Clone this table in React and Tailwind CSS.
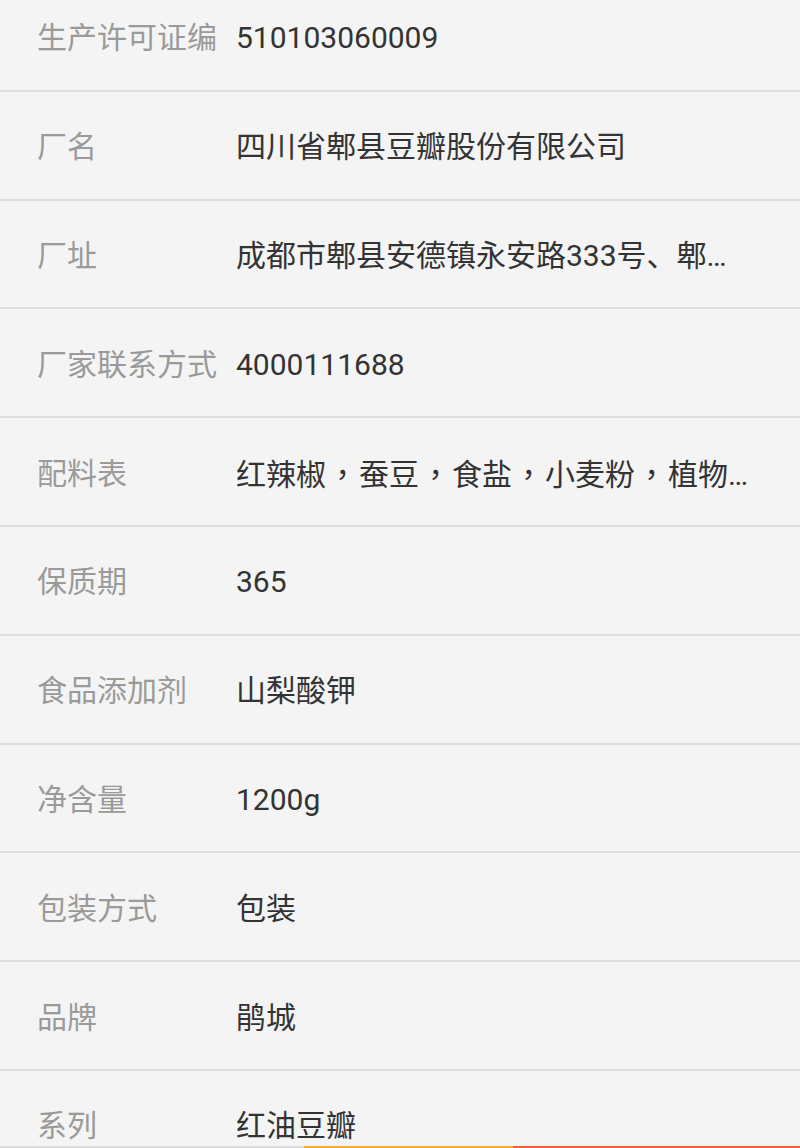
export default function App() {
  const C = ({ children }) => (
    <span className="px-[1.5px]" style={{ fontFamily: '"Noto Sans CJK TC", sans-serif' }}>{children}</span>
  );
  const rows = [
    ["生产许可证编", "510103060009"],
    ["厂名", "四川省郫县豆瓣股份有限公司"],
    ["厂址", "成都市郫县安德镇永安路333号、郫县安德镇川菜园区"],
    ["厂家联系方式", "4000111688"],
    [
      "配料表",
      <>
        红辣椒<C>，</C>蚕豆<C>，</C>食盐<C>，</C>小麦粉<C>，</C>植物油<C>，</C>香辛料
      </>,
    ],
    ["保质期", "365"],
    ["食品添加剂", "山梨酸钾"],
    ["净含量", "1200g"],
    ["包装方式", "包装"],
    ["品牌", "鹃城"],
    ["系列", "红油豆瓣"],
  ];
  const font = {
    fontFamily: '"Roboto", "Noto Sans CJK SC", sans-serif',
  };
  return (
    <div className="relative w-[800px] h-[1148px] overflow-hidden bg-[#f4f4f4]" style={font}>
      <div className="-mt-[17px] flex flex-col">
        {rows.map(([k, v], i) => (
          <div
            key={i}
            className="box-border h-[108.8px] shrink-0 flex items-center border-b-2 border-[#dedede] pl-[37px] pr-[40px] pt-[4px]"
          >
            <div className="w-[199px] shrink-0 text-[30px] leading-none text-[#9a9a9a] whitespace-nowrap">{k}</div>
            <div className="min-w-0 max-w-[514px] text-[30px] leading-[38px] text-[#333333] whitespace-nowrap overflow-hidden text-ellipsis">
              {v}
            </div>
          </div>
        ))}
      </div>
      <div className="absolute left-0 bottom-0 w-full h-[2px] flex">
        <div className="w-[304px] bg-[#dcdcdc]" />
        <div className="w-[209px] bg-[#f2ae34]" />
        <div className="flex-1 bg-[#f0603a]" />
      </div>
    </div>
  );
}
